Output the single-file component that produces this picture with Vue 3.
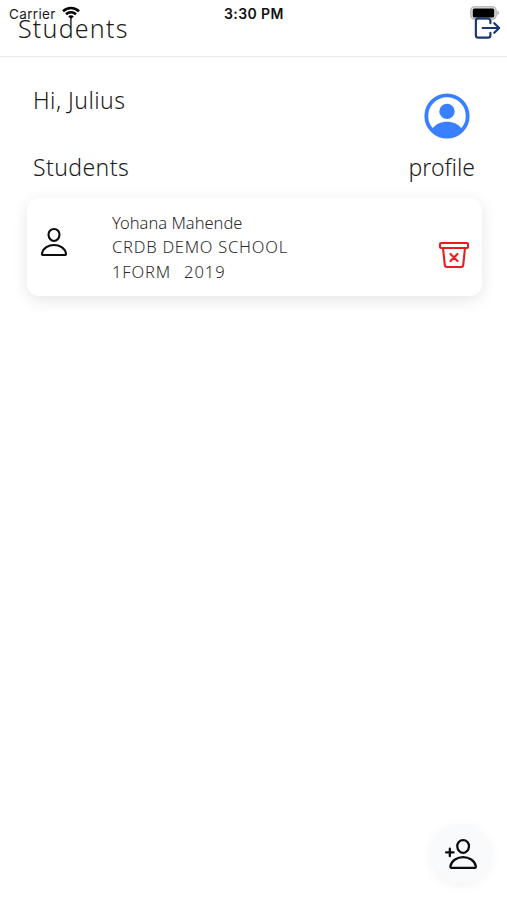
<script setup>
const students = [
  { name: 'Yohana Mahende', school: 'CRDB DEMO SCHOOL', form: '1FORM', year: '2019' }
]
</script>

<template>
  <main class="screen">
    <div class="status">
      <span class="carrier">Carrier</span>
      <svg class="wifi" viewBox="0 0 18 14">
        <path d="M1 5.2C5.5.9 12.5.9 17 5.2M4 8.2c2.8-2.6 7.2-2.6 10 0" />
        <path class="dot" d="M6.2 10.3c1.6-1.4 4-1.4 5.6 0L9 13.2z" />
      </svg>
      <span class="clock">3:30 PM</span>
      <svg class="battery" viewBox="0 0 30 14">
        <rect class="shell" x=".8" y=".8" width="25.4" height="12.4" rx="3.6" />
        <rect class="charge" x="2.8" y="2.4" width="21.4" height="9.2" rx="1.6" />
        <path class="cap" d="M27.4 4.8c2.2.7 2.2 3.7 0 4.4z" />
      </svg>
    </div>

    <header class="header">
      <h1 class="title">Students</h1>
      <svg class="icon logout" viewBox="0 0 512 512">
        <path d="M304 336v40a40 40 0 01-40 40H104a40 40 0 01-40-40V136a40 40 0 0140-40h152c22.09 0 48 17.91 48 40v40M368 336l80-80-80-80M176 256h256" />
      </svg>
    </header>

    <section class="intro">
      <p class="greeting">Hi, Julius</p>
      <svg class="avatar" viewBox="0 0 46 46">
        <circle class="ring" cx="23" cy="23" r="20.7" />
        <circle cx="23" cy="18.4" r="7.7" />
        <path d="M8.2 36.2C11.5 31 17 28.8 23 28.8s11.5 2.2 14.8 7.4C34 41 29 43.5 23 43.5S12 41 8.2 36.2z" />
      </svg>
    </section>
    <section class="labels">
      <span class="list-label">Students</span>
      <span class="profile">profile</span>
    </section>

    <article v-for="s in students" :key="s.name" class="card">
      <svg class="icon person" viewBox="0 0 512 512">
        <path d="M344 144c-3.92 52.87-44 96-88 96s-84.15-43.12-88-96c-4-55 35-96 88-96s92 42 88 96z" />
        <path d="M256 304c-87 0-175.3 48-191.64 138.6C62.39 453.52 68.57 464 80 464h352c11.44 0 17.62-10.48 15.65-21.4C431.3 352 343 304 256 304z" />
      </svg>
      <div class="details">
        <span class="name">{{ s.name }}</span>
        <span class="school">{{ s.school }}</span>
        <div class="year"><span class="form">{{ s.form }}</span><span class="num">{{ s.year }}</span></div>
      </div>
      <svg class="icon bin" viewBox="0 0 512 512">
        <path d="M432 144l-28.67 275.74A32 32 0 01371.55 448H140.46a32 32 0 01-31.78-28.26L80 144M312 240L200 352M312 352L200 240" />
        <rect x="32" y="64" width="448" height="80" rx="16" />
      </svg>
    </article>

    <button class="fab">
      <svg class="icon add" viewBox="0 0 512 512">
        <path d="M376 144c-3.92 52.87-44 96-88 96s-84.15-43.12-88-96c-4-55 35-96 88-96s92 42 88 96z" />
        <path d="M288 304c-87 0-175.3 48-191.64 138.6-2 10.92 4.21 21.4 15.65 21.4H464c11.44 0 17.62-10.48 15.65-21.4C463.3 352 375 304 288 304zM88 176v112M144 232H32" />
      </svg>
    </button>
  </main>
</template>

<style>
body { background: #fff; overflow: hidden; }
</style>

<style scoped>
* { box-sizing: border-box; }
.screen {
  position: relative;
  display: flex;
  flex-direction: column;
  width: 507px;
  height: 900px;
  background: #fff;
  color: #1c1c1c;
  font-family: "Noto Sans", "Open Sans", sans-serif;
  font-weight: 300;
}
.status {
  position: absolute;
  inset: 0 0 auto;
  height: 28px;
  padding: 0 7px 0 9px;
  display: flex;
  align-items: center;
  font: 400 13.5px/28px Inter, sans-serif;
}
.carrier { width: 53px; letter-spacing: .35px; white-space: nowrap; }
.wifi { width: 18px; height: 14px; fill: none; stroke: #000; stroke-width: 2.6; margin-top: -2px; }
.wifi .dot { fill: #000; stroke: none; }
.clock { margin-left: 144px; font-weight: 600; font-size: 14px; letter-spacing: .4px; white-space: nowrap; color: #111; }
.battery { width: 30px; height: 14px; margin: -2px 0 0 auto; }
.shell { fill: #ddd; stroke: #aaa; stroke-width: 1.1; }
.charge { fill: #000; }
.cap { fill: #aaa; }
.icon { width: 32px; height: 32px; fill: none; stroke: #0c0c0c; stroke-width: 34; stroke-linecap: round; stroke-linejoin: round; flex: none; }
.header {
  position: relative;
  height: 57px;
  padding: 11px 4px 0 18px;
  border-bottom: 1px solid #e9e9e9;
  display: flex;
  justify-content: space-between;
}
.title { margin: 0; font-size: 25px; line-height: 34px; font-weight: 350; letter-spacing: 1.2px; }
.header .logout { width: 31px; margin: 1px 0 0; height: 32px; stroke: #173a70; stroke-width: 36; }
.intro { display: flex; justify-content: space-between; padding: 27px 37px 0 33px; height: 94px; }
.greeting { margin: 0; font-size: 23px; line-height: 32px; letter-spacing: .45px; }
.avatar { width: 46px; height: 46px; margin-top: 9px; fill: #3880ff; }
.ring { fill: none; stroke: #3880ff; stroke-width: 3.8; }
.labels { display: flex; justify-content: space-between; height: 47px; padding: 0 32px 0 33px; font-size: 23px; line-height: 32px; }
.list-label { letter-spacing: .4px; }
.card {
  display: flex;
  width: 455px;
  height: 98px;
  margin-left: 26.5px;
  padding: 13px 12px 0;
  border-radius: 12px;
  background: #fff;
  box-shadow: 0 4px 16px rgba(0, 0, 0, .1);
}
.person { margin: 15px 0 0 -.5px; }
.details { display: flex; flex-direction: column; margin-left: 42px; font-size: 16.5px; line-height: 24.4px; color: #2b2b2b; white-space: nowrap; align-items: flex-start; }
.school { letter-spacing: .75px; }
.year { display: flex; gap: 13px; }
.form { letter-spacing: .85px; }
.num { letter-spacing: 1px; }
.bin { margin: 28px 0 0 auto; stroke: #e71f1f; }
.fab {
  width: 58px;
  height: 58px;
  margin: auto 17px 17px auto;
  padding: 0;
  border: 0;
  border-radius: 50%;
  background: #f8fafc;
  box-shadow: 0 2px 14px rgba(0, 0, 0, .06);
  display: grid;
  place-items: center;
}
.add { width: 34px; height: 34px; }
</style>
